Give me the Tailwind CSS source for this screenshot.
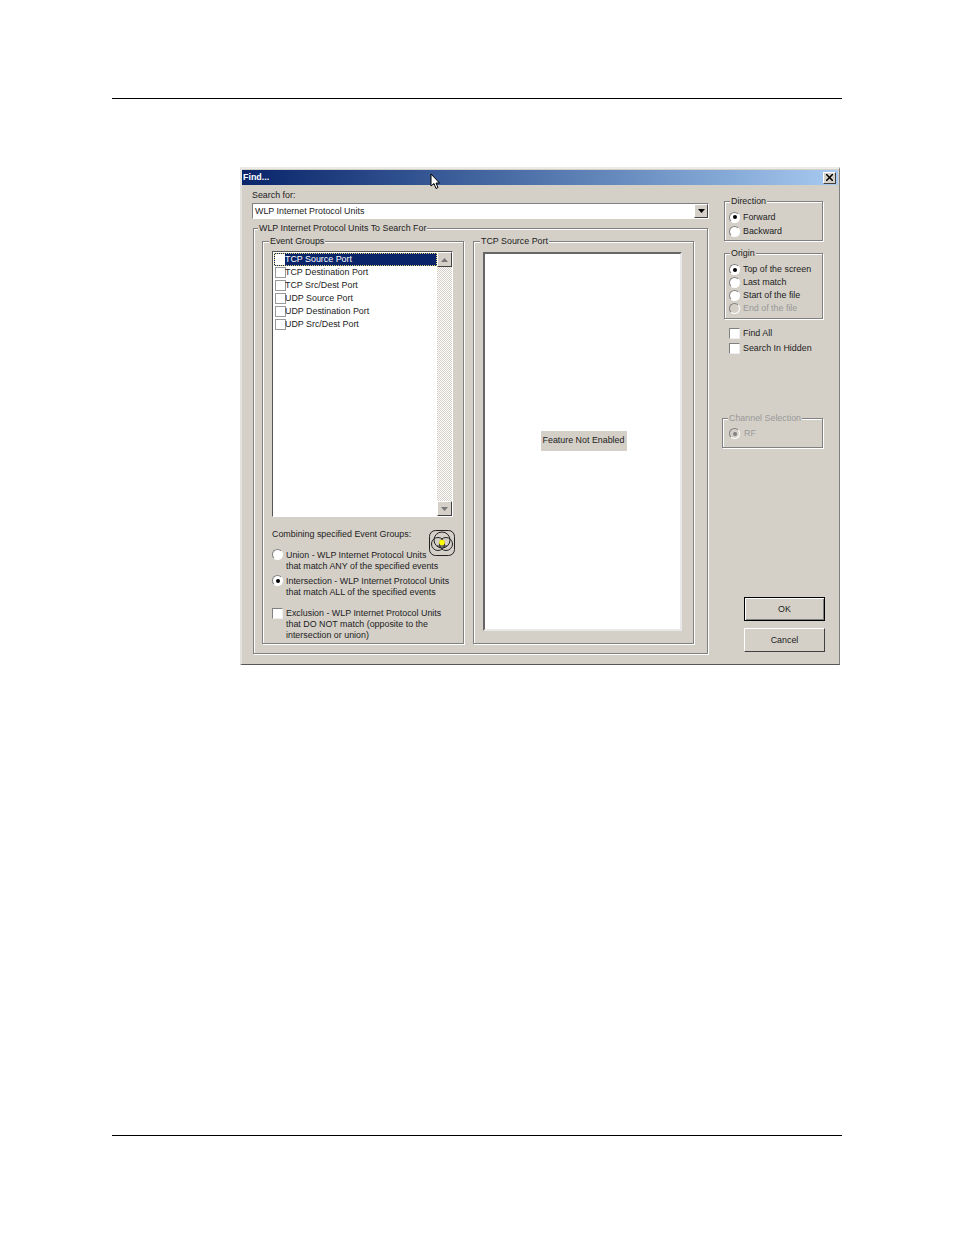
<!DOCTYPE html>
<html lang="en">
<head>
    <meta charset="UTF-8">
    <title>Find</title>
    <script src="https://cdn.jsdelivr.net/npm/@tailwindcss/browser@4"></script>
</head>
<body class="bg-white text-[#222] font-['Liberation_Sans',Arial,sans-serif] text-[8.9px] leading-[11px] whitespace-nowrap w-[954px] h-[1235px] overflow-hidden">
    <div class="pt-[98px] px-[112px]">
        <div class="h-px bg-black w-[730px]"></div>

        <!-- Find dialog -->
        <div class="relative mt-[68px] ml-[128px] w-[600px] h-[498px] bg-[#d4d0c8] border-t-2 border-l-2 border-t-[#ecebe6] border-l-[#e4e2dc] border-r border-b border-r-[#808080] border-b-[#555]">
            <!-- Title bar -->
            <div class="flex items-center justify-between h-[15px] mt-[1px] mr-[1px] pr-[2px] bg-gradient-to-r from-[#0a246a] to-[#a6caf0] text-white font-bold">
                <span class="pl-[1px]">Find...</span>
                <span class="flex items-center justify-center w-[13px] h-[12px] bg-[#d4d0c8] border border-t-white border-l-white border-r-[#404040] border-b-[#404040]">
                    <svg width="7" height="7" viewBox="0 0 7 7"><path d="M0 0L7 7M7 0L0 7" stroke="#000" stroke-width="1.5"/></svg>
                </span>
            </div>
            <!-- Mouse pointer -->
            <svg class="absolute left-[188px] top-[4px]" width="11" height="17" viewBox="0 0 11 17"><path d="M1 1V13L4 10.500L6 15.500L8 14.500L6 10H9.500Z" fill="#fff" stroke="#000" stroke-width="1"/></svg>

            <div class="flex">
                <!-- Left side -->
                <div class="w-[457px] ml-[10px]">
                    <div class="pt-[5px] h-[16px]">Search for:</div>
                    <div class="flex items-center justify-between h-[16px] mt-[2px] bg-white border border-t-[#808080] border-l-[#808080] border-r-white border-b-white pl-[2px]">
                        <span>WLP Internet Protocol Units</span>
                        <span class="flex items-center justify-center w-[14px] h-[14px] bg-[#d4d0c8] border border-t-white border-l-white border-r-[#404040] border-b-[#404040]">
                            <svg width="7" height="4" viewBox="0 0 7 4"><path d="M0 0H7L3.500 4Z" fill="#000"/></svg>
                        </span>
                    </div>

                    <div class="relative flex gap-[9px] w-[455px] h-[426px] ml-px mt-[9px] pt-[12px] pl-[8px] border border-[#808080] shadow-[1px_1px_0_#fff,inset_1px_1px_0_#fff]">
                        <span class="absolute -top-[6px] left-[4px] bg-[#d4d0c8] px-px">WLP Internet Protocol Units To Search For</span>

                        <!-- Event Groups -->
                        <div class="relative w-[202px] h-[403px] pt-[9px] pl-[9px] border border-[#808080] shadow-[1px_1px_0_#fff,inset_1px_1px_0_#fff]">
                            <span class="absolute -top-[6px] left-[6px] bg-[#d4d0c8] px-px">Event Groups</span>
                            <div class="flex w-[181px] h-[266px] bg-white border border-t-[#555] border-l-[#555] border-r-white border-b-white">
                                <div class="flex-1 pt-px pl-px">
                                    <div class="flex items-center h-[13px] bg-[#0a246a] text-white outline-1 outline-dotted outline-[#e0d070] -outline-offset-1">
                                        <span class="w-[10px] h-[11px] ml-px bg-white"></span><span>TCP Source Port</span>
                                    </div>
                                    <div class="flex items-center h-[13px]"><span class="w-[11px] h-[11px] ml-px bg-white border border-[#999]"></span><span class="-ml-px">TCP Destination Port</span></div>
                                    <div class="flex items-center h-[13px]"><span class="w-[11px] h-[11px] ml-px bg-white border border-[#999]"></span><span class="-ml-px">TCP Src/Dest Port</span></div>
                                    <div class="flex items-center h-[13px]"><span class="w-[11px] h-[11px] ml-px bg-white border border-[#999]"></span><span class="-ml-px">UDP Source Port</span></div>
                                    <div class="flex items-center h-[13px]"><span class="w-[11px] h-[11px] ml-px bg-white border border-[#999]"></span><span class="-ml-px">UDP Destination Port</span></div>
                                    <div class="flex items-center h-[13px]"><span class="w-[11px] h-[11px] ml-px bg-white border border-[#999]"></span><span class="-ml-px">UDP Src/Dest Port</span></div>
                                </div>
                                <!-- Scrollbar -->
                                <div class="flex flex-col justify-between w-[15px] bg-[image:repeating-conic-gradient(#d4d0c8_0_25%,#fff_0_50%)] bg-[size:2px_2px]">
                                    <span class="flex items-center justify-center h-[15px] bg-[#d4d0c8] border border-t-white border-l-white border-r-[#404040] border-b-[#404040]">
                                        <svg width="7" height="4" viewBox="0 0 7 4"><path d="M3.500 0L7 4H0Z" fill="#777"/></svg>
                                    </span>
                                    <span class="flex items-center justify-center h-[15px] bg-[#d4d0c8] border border-t-white border-l-white border-r-[#404040] border-b-[#404040]">
                                        <svg width="7" height="4" viewBox="0 0 7 4"><path d="M0 0H7L3.500 4Z" fill="#777"/></svg>
                                    </span>
                                </div>
                            </div>

                            <div class="relative w-[185px]">
                                <div class="pt-[12px] h-[33px]">Combining specified Event Groups:</div>
                                <svg class="absolute left-[157px] top-[13px]" width="26" height="27" viewBox="0 0 26 27" fill="none" stroke="#222" stroke-width="1">
                                    <rect x="0.500" y="0.500" width="25" height="25" rx="6"/>
                                    <circle cx="13" cy="10" r="8"/>
                                    <circle cx="9" cy="14" r="6.500"/>
                                    <circle cx="17" cy="14" r="6.500"/>
                                    <path d="M8 16H18"/>
                                    <circle cx="13" cy="12.500" r="2.800" fill="#ffff00" stroke="none"/>
                                </svg>
                                <div class="flex">
                                    <span class="flex items-center justify-center shrink-0 w-[11px] h-[11px] -mt-px rounded-full bg-white border border-t-[#808080] border-l-[#808080] border-r-white border-b-white"></span>
                                    <p class="ml-[3px]">Union - WLP Internet Protocol Units<br>that match ANY of the specified events</p>
                                </div>
                                <div class="flex mt-[4px]">
                                    <span class="flex items-center justify-center shrink-0 w-[11px] h-[11px] -mt-px rounded-full bg-white border border-t-[#808080] border-l-[#808080] border-r-white border-b-white"><span class="w-[4px] h-[4px] rounded-full bg-black"></span></span>
                                    <p class="ml-[3px]">Intersection - WLP Internet Protocol Units<br>that match ALL of the specified events</p>
                                </div>
                                <div class="flex mt-[10px]">
                                    <span class="shrink-0 w-[11px] h-[11px] bg-white border border-t-[#808080] border-l-[#808080] border-r-[#eee] border-b-[#eee]"></span>
                                    <p class="ml-[3px]">Exclusion - WLP Internet Protocol Units<br>that DO NOT match (opposite to the<br>intersection or union)</p>
                                </div>
                            </div>
                        </div>

                        <!-- TCP Source Port -->
                        <div class="relative w-[221px] h-[403px] pt-[10px] pl-[9px] border border-[#808080] shadow-[1px_1px_0_#fff,inset_1px_1px_0_#fff]">
                            <span class="absolute -top-[6px] left-[6px] bg-[#d4d0c8] px-px">TCP Source Port</span>
                            <div class="flex items-center justify-center w-[199px] h-[379px] bg-white border-2 border-t-[#666] border-l-[#666] border-r-[#e8e8e8] border-b-[#e8e8e8]">
                                <span class="flex items-center justify-center w-[86px] h-[20px] -mt-[1px] ml-[2px] pb-[2px] bg-[#d4d0c8]">Feature Not Enabled</span>
                            </div>
                        </div>
                    </div>
                </div>

                <!-- Right side -->
                <div class="w-[130px] pl-[15px] pt-[16px]">
                    <div class="relative w-[99px] h-[40px] pt-[8px] pl-[4px] border border-[#808080] shadow-[1px_1px_0_#fff,inset_1px_1px_0_#fff]">
                        <span class="absolute -top-[6px] left-[5px] bg-[#d4d0c8] px-px">Direction</span>
                        <div class="flex items-center h-[14px]"><span class="flex items-center justify-center w-[11px] h-[11px] rounded-full bg-white border border-t-[#808080] border-l-[#808080] border-r-white border-b-white"><span class="w-[4px] h-[4px] rounded-full bg-black"></span></span><span class="ml-[3px]">Forward</span></div>
                        <div class="flex items-center h-[14px]"><span class="w-[11px] h-[11px] rounded-full bg-white border border-t-[#808080] border-l-[#808080] border-r-white border-b-white"></span><span class="ml-[3px]">Backward</span></div>
                    </div>
                    <div class="relative w-[99px] h-[66px] mt-[12px] pt-[9px] pl-[4px] border border-[#808080] shadow-[1px_1px_0_#fff,inset_1px_1px_0_#fff]">
                        <span class="absolute -top-[6px] left-[5px] bg-[#d4d0c8] px-px">Origin</span>
                        <div class="flex items-center h-[13px]"><span class="flex items-center justify-center w-[11px] h-[11px] rounded-full bg-white border border-t-[#808080] border-l-[#808080] border-r-white border-b-white"><span class="w-[4px] h-[4px] rounded-full bg-black"></span></span><span class="ml-[3px]">Top of the screen</span></div>
                        <div class="flex items-center h-[13px]"><span class="w-[11px] h-[11px] rounded-full bg-white border border-t-[#808080] border-l-[#808080] border-r-white border-b-white"></span><span class="ml-[3px]">Last match</span></div>
                        <div class="flex items-center h-[13px]"><span class="w-[11px] h-[11px] rounded-full bg-white border border-t-[#808080] border-l-[#808080] border-r-white border-b-white"></span><span class="ml-[3px]">Start of the file</span></div>
                        <div class="flex items-center h-[13px] text-[#999]"><span class="w-[11px] h-[11px] rounded-full bg-[#d4d0c8] border border-t-[#808080] border-l-[#808080] border-r-white border-b-white"></span><span class="ml-[3px]">End of the file</span></div>
                    </div>
                    <div class="flex items-center h-[15px] mt-[7px] ml-[5px]"><span class="w-[11px] h-[11px] bg-white border border-t-[#808080] border-l-[#808080] border-r-[#eee] border-b-[#eee]"></span><span class="ml-[3px]">Find All</span></div>
                    <div class="flex items-center h-[15px] ml-[5px]"><span class="w-[11px] h-[11px] bg-white border border-t-[#808080] border-l-[#808080] border-r-[#eee] border-b-[#eee]"></span><span class="ml-[3px]">Search In Hidden</span></div>

                    <div class="relative w-[101px] h-[30px] mt-[62px] -ml-[2px] pt-[8px] pl-[6px] border border-[#808080] shadow-[1px_1px_0_#fff,inset_1px_1px_0_#fff] text-[#999]">
                        <span class="absolute -top-[6px] left-[5px] bg-[#d4d0c8] px-px">Channel Selection</span>
                        <div class="flex items-center h-[13px]"><span class="flex items-center justify-center w-[11px] h-[11px] rounded-full bg-[#d4d0c8] border border-t-[#808080] border-l-[#808080] border-r-white border-b-white"><span class="w-[4px] h-[4px] rounded-full bg-[#808080]"></span></span><span class="ml-[4px]">RF</span></div>
                    </div>

                    <div class="flex items-center justify-center w-[81px] h-[24px] mt-[149px] ml-[20px] bg-[#d4d0c8] border border-black shadow-[inset_1px_1px_0_#fff,inset_-1px_-1px_0_#808080]">OK</div>
                    <div class="flex items-center justify-center w-[81px] h-[24px] mt-[7px] ml-[20px] bg-[#d4d0c8] border border-t-white border-l-white border-r-[#404040] border-b-[#404040]">Cancel</div>
                </div>
            </div>
        </div>

        <div class="h-px bg-black w-[730px] mt-[470px]"></div>
    </div>
</body>
</html>
